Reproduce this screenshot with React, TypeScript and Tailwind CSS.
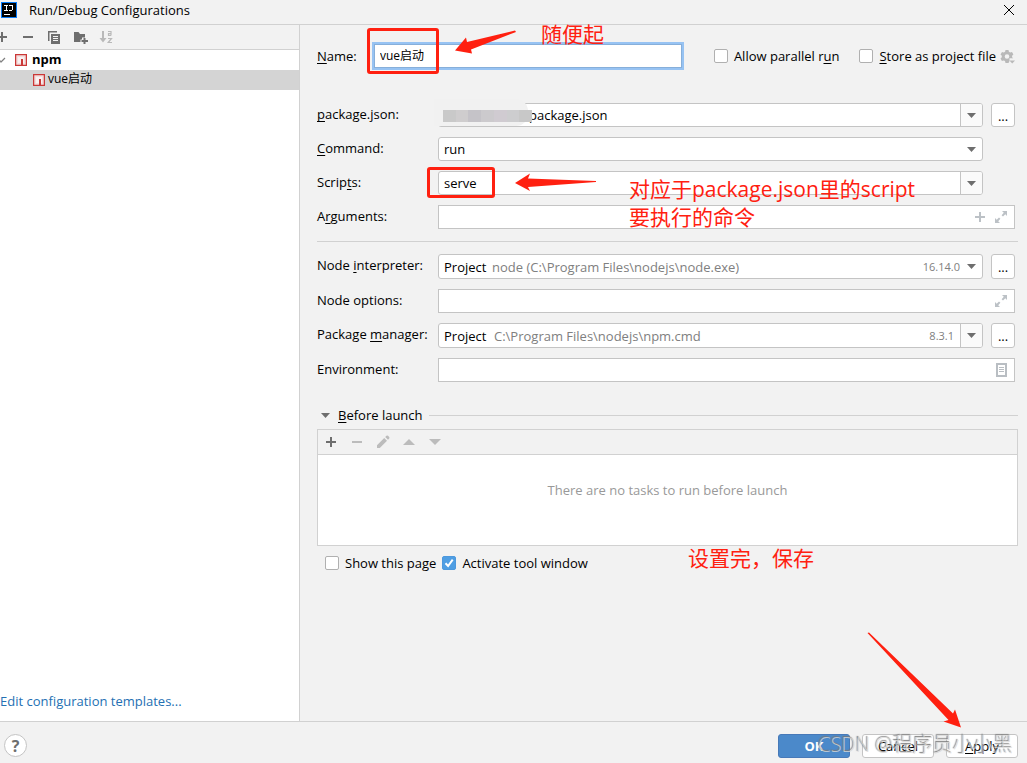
import { useState, type ReactNode } from "react";

// "&" marks the mnemonic letter, same as in the IDE's bundles
function Mnemonic({ text }: { text: string }) {
    const at = text.indexOf("&");
    if (at < 0) return <>{text}</>;
    return (
        <>
            {text.slice(0, at)}
            <span className="underline underline-offset-2 [text-decoration-skip-ink:none]">{text[at + 1]}</span>
            {text.slice(at + 2)}
        </>
    );
}

function NpmIcon() {
    return (
        <svg width="12" height="12" viewBox="0 0 12 12" className="shrink-0">
            <rect x="0.6" y="0.6" width="10.8" height="10.8" fill="#f3dede" stroke="#cb3837" strokeWidth="1.3" />
            <path d="M3 3h6v6H3z" fill="#fff" fillOpacity="0.6" />
            <path d="M6 5h2v6H6z" fill="#cb3837" />
        </svg>
    );
}

function Arrow() {
    return (
        <svg width="9" height="5" viewBox="0 0 9 5" fill="#6e6e6e">
            <path d="M0 0h9L4.5 5z" />
        </svg>
    );
}

function ExpandIcon() {
    return (
        <svg width="12" height="12" viewBox="0 0 12 12" fill="#bcc1c6">
            <path d="M7 0h5v5l-1.7-1.7L8 5.6 6.6 4.2 8.8 1.8zM0 7l1.7 1.7L4 6.4l1.4 1.4-2.2 2.4L5 12H0z" />
        </svg>
    );
}

function Row({ id, label, tall, children }: { id: string; label: string; tall?: boolean; children: ReactNode }) {
    return (
        <div className={tall ? "flex h-[25px] items-stretch" : "flex h-6 items-stretch"}>
            <label htmlFor={id} className="w-[121px] shrink-0 whitespace-nowrap">
                <Mnemonic text={label} />
            </label>
            {children}
        </div>
    );
}

function ArrowButton({ label }: { label: string }) {
    return (
        <button aria-label={label} className="flex w-[22px] items-center justify-center border-l border-[#c4c4c4] bg-[#fafafa]">
            <Arrow />
        </button>
    );
}

function MoreButton({ label }: { label: string }) {
    return (
        <button
            aria-label={label}
            className="ml-2 mr-[3px] w-6 shrink-0 rounded-[3px] border border-[#c4c4c4] bg-white text-center leading-6"
        >
            ...
        </button>
    );
}

const comboBox = "flex min-w-0 flex-1 overflow-hidden rounded-[3px] border border-[#c4c4c4] bg-white";
const plainBox = "mr-[3px] flex min-w-0 flex-1 items-center border border-[#c4c4c4] bg-white pr-[7px]";

function CheckBox({ label, initial = false }: { label: string; initial?: boolean }) {
    const [checked, setChecked] = useState(initial);
    return (
        <label className="flex items-center gap-[6px] whitespace-nowrap">
            <span className="grid">
                <input
                    type="checkbox"
                    checked={checked}
                    onChange={(e) => setChecked(e.target.checked)}
                    className="col-start-1 row-start-1 size-[14px] appearance-none rounded-[2px] border border-[#b0b0b0] bg-white checked:border-[#4d98dd] checked:bg-[#4f9ee3]"
                />
                {checked && (
                    <svg
                        width="14"
                        height="14"
                        viewBox="0 0 14 14"
                        fill="none"
                        className="pointer-events-none col-start-1 row-start-1"
                    >
                        <path d="M3.5 7.2l2.6 2.8 4.6-6.4" stroke="#fff" strokeWidth="2" />
                    </svg>
                )}
            </span>
            <span>
                <Mnemonic text={label} />
            </span>
        </label>
    );
}

function Sidebar() {
    return (
        <aside className="flex w-[300px] shrink-0 flex-col border-r border-[#d1d1d1] bg-white">
            <div className="flex h-[25px] shrink-0 items-center border-b border-[#d1d1d1] bg-[#f2f2f2]">
                <button aria-label="Add" className="w-[22px]">
                    <svg width="8" height="12" viewBox="0 0 8 12" fill="#6e6e6e">
                        <path d="M0 5h7v2H0zM1 1h2v10H1z" />
                    </svg>
                </button>
                <button aria-label="Remove" className="w-[26px]">
                    <svg width="12" height="12" viewBox="0 0 12 12" fill="#6e6e6e">
                        <path d="M1 5h10v2H1z" />
                    </svg>
                </button>
                <button aria-label="Copy" className="w-[25px]">
                    <svg width="13" height="13" viewBox="0 0 13 13" fill="#6e6e6e">
                        <path d="M0 0h9v1.5H1.5V10H0z" />
                        <path fillRule="evenodd" d="M3 3h9v10H3zM5 5v1h5V5zM5 7v1h5V7zM5 9v1h5V9z" />
                    </svg>
                </button>
                <button aria-label="New folder" className="w-[26px]">
                    <svg width="15" height="13" viewBox="0 0 15 13" fill="#6e6e6e">
                        <path d="M1 1h4.500l1.500 2h5v3.500h-3v2H7.500V11H1z" />
                        <path d="M10.500 7h2v2H15v2h-2.500v2h-2v-2H8.500V9h2z" />
                    </svg>
                </button>
                <button aria-label="Sort alphabetically" disabled>
                    <svg width="14" height="14" viewBox="0 0 14 14" fill="none" stroke="#b9b9b9">
                        <path d="M4 1v9" strokeWidth="2" />
                        <path d="M.5 8h7L4 12.500z" fill="#b9b9b9" stroke="none" />
                        <path
                            d="M9 1.500h3v4M12 3.500H9.500v1.800H12M9 8.500h3.500L9.200 12.500H13"
                            strokeWidth="1.2"
                        />
                    </svg>
                </button>
            </div>
            <div className="flex h-5 items-center font-bold">
                <svg width="6" height="6" viewBox="0 0 6 6" fill="none" className="mr-[9px]">
                    <path d="M0 3.500L1 5 5 1" stroke="#7f7f7f" strokeWidth="1.200" />
                </svg>
                <NpmIcon />
                <span className="ml-[5px] pb-0.5">npm</span>
            </div>
            <div className="flex h-5 items-center gap-[3px] bg-[#d4d4d4] pl-[33px]">
                <NpmIcon />
                <span className="pb-0.5 text-[12px]">vue启动</span>
            </div>
            <a href="#templates" className="mt-auto mb-[9px] self-start text-[#2470b3]">
                Edit configuration templates...
            </a>
        </aside>
    );
}

function BeforeLaunch() {
    return (
        <section>
            <div className="mt-[23px] flex h-5 items-center">
                <button className="flex items-center gap-2 pl-1 whitespace-nowrap">
                    <Arrow />
                    <span>
                        <Mnemonic text="&Before launch" />
                    </span>
                </button>
                <div className="ml-[6px] h-px flex-1 bg-[#d1d1d1]" />
            </div>
            <div className="mt-1 h-[117px] border border-[#d1d1d1] bg-white">
                <div className="flex h-[25px] items-center gap-3 border-b border-[#d1d1d1] bg-[#f2f2f2] pl-[6px]">
                    <button aria-label="Add task">
                        <svg width="14" height="14" viewBox="0 0 14 14" fill="#6e6e6e">
                            <path d="M2 6h10v2H2zM6 2h2v10H6z" />
                        </svg>
                    </button>
                    <button aria-label="Remove task" disabled>
                        <svg width="14" height="14" viewBox="0 0 14 14" fill="#bcbcbc">
                            <path d="M2 6h10v2H2z" />
                        </svg>
                    </button>
                    <button aria-label="Edit task" disabled>
                        <svg width="14" height="14" viewBox="0 0 14 14" fill="#bcbcbc">
                            <path d="M1 10.200L8.200 3l2.800 2.800L3.800 13H1zM9.200 2l1.200-1.200q.8-.6 1.600 0l1.200 1.200q.6.800 0 1.600L12 4.800z" />
                        </svg>
                    </button>
                    <button aria-label="Move task up" disabled>
                        <svg width="14" height="14" viewBox="0 0 14 14" fill="#bcbcbc">
                            <path d="M1 10h12L7 4z" />
                        </svg>
                    </button>
                    <button aria-label="Move task down" disabled>
                        <svg width="14" height="14" viewBox="0 0 14 14" fill="#bcbcbc">
                            <path d="M1 4h12l-6 6z" />
                        </svg>
                    </button>
                </div>
                <p className="pt-6 text-center text-[#999]">There are no tasks to run before launch</p>
            </div>
            <div className="mt-[6px] flex gap-[6px] pl-2">
                <CheckBox label="Show this page" />
                <CheckBox label="Activate tool window" initial />
            </div>
        </section>
    );
}

// Hand-drawn marks over the dialog
function Annotations() {
    return (
        <div className="pointer-events-none absolute inset-0 text-[21px] leading-7 text-[#ff2010]">
            <div className="absolute top-[28px] left-[367px] h-[46px] w-[72px] rounded-[3px] border-3 border-[#ff2010]" />
            <div className="absolute top-[167px] left-[427px] h-[31px] w-[68px] rounded-[3px] border-3 border-[#ff2010]" />
            <svg className="absolute top-[30px] left-[454px]" width="64" height="26" viewBox="0 0 64 26" fill="#ff2010">
                <path d="M1 20.500L12 7.500l1 4.500L61 0.500l1 1.500L17 19.500l1 4z" />
            </svg>
            <svg className="absolute top-[173px] left-[515px]" width="82" height="20" viewBox="0 0 82 20" fill="#ff2010">
                <path d="M0 10L15 0.500l-2 5L81 8v1l-68 5 2 4z" />
            </svg>
            <svg className="absolute top-[632px] left-[867px]" width="96" height="97" viewBox="0 0 96 97" fill="#ff2010">
                <path d="M0.500 1L2 0.500 86 81.500 88 77.500 94 95.500 76.500 89.500l5-1.500z" />
            </svg>
            <span className="absolute top-[20px] left-[541px] whitespace-nowrap">随便起</span>
            <p className="absolute top-[175px] left-[629px] whitespace-nowrap">
                对应于package.json里的script
                <br />
                要执行的命令
            </p>
            <span className="absolute top-[544px] left-[688px] whitespace-nowrap">设置完，保存</span>
        </div>
    );
}

export default function App() {
    const [name, setName] = useState("vue启动");

    return (
        <div className="relative flex min-h-screen flex-col bg-[#f2f2f2] font-['Open_Sans','Noto_Sans_CJK_SC',sans-serif] text-[13px] leading-[22px] text-black">
            <header className="flex h-[25px] shrink-0 items-center border-b border-[#d1d1d1] pb-1 pl-px">
                <svg width="16" height="16" viewBox="0 0 16 16" shapeRendering="crispEdges">
                    <rect width="16" height="16" fill="#087cfa" />
                    <rect x="1" y="1" width="14" height="14" fill="#000" />
                    <path d="M3 3.500h4M5 3v5M3 8.500h4M8 3.500h4M11.500 3v5M8 8.500h3" fill="none" stroke="#fff" />
                    <path d="M3 12h6v1H3z" fill="#fff" />
                </svg>
                <h1 className="ml-3">Run/Debug Configurations</h1>
                <button aria-label="Close" className="mr-[13px] ml-auto">
                    <svg width="10" height="10" viewBox="0 0 10 10" stroke="#000">
                        <path d="M0 0l10 10M10 0L0 10" />
                    </svg>
                </button>
            </header>

            <div className="flex flex-1">
                <Sidebar />
                <main className="min-w-0 flex-1 pt-[18px] pr-[9px] pl-[17px]">
                    <div className="flex h-[26px] items-center">
                        <label htmlFor="name" className="w-[57px] shrink-0">
                            <Mnemonic text="&Name:" />
                        </label>
                        <input
                            id="name"
                            value={name}
                            onChange={(e) => setName(e.target.value)}
                            className="h-6 min-w-0 flex-1 border border-[#87afda] bg-white pb-0.5 pl-[5px] text-[12px] ring-2 ring-[#97c3f3] outline-none"
                        />
                        <div className="ml-8 flex shrink-0 items-center gap-5">
                            <CheckBox label="Allow parallel r&un" />
                            <CheckBox label="&Store as project file" />
                        </div>
                        <button aria-label="Project file settings" className="mr-[3px] ml-1">
                            <svg width="15" height="15" viewBox="0 0 15 15" fill="#b9b9b9">
                                <path
                                    fillRule="evenodd"
                                    d="M5.500 1h3l.4 1.800 1.300.8 1.800-.6L13.400 5.500 12.100 6.800v1.400l1.100 1H9.500v2.700L8.500 14h-3l-.5-1.900-1.300-.7-1.800.5L.5 9.400l1.300-1.200V6.800L.5 5.500 2 3l1.800.6 1.300-.8zM7 5.200a2.300 2.300 0 100 4.600 2.300 2.300 0 000-4.600z"
                                />
                                <path d="M9.500 11.500H15L12.200 14.500z" />
                            </svg>
                        </button>
                    </div>

                    <div className="mt-[34px] flex flex-col gap-[10px]">
                        <Row id="package-json" label="&package.json:">
                            <div className="relative flex min-w-0 flex-1">
                                <div className={comboBox}>
                                    <input
                                        id="package-json"
                                        defaultValue="package.json"
                                        className="min-w-0 flex-1 pl-[90px] outline-none"
                                    />
                                    <ArrowButton label="Choose package.json" />
                                </div>
                                {/* path is blurred out */}
                                <div className="absolute -top-1 -left-1 h-[27px] w-[94px] rounded-r-xl bg-[#f1f1f1]" />
                                <div className="absolute top-[7px] left-[5px] flex h-3 w-[89px]">
                                    <span className="flex-1 bg-[#c9c9c9]" />
                                    <span className="flex-1 bg-[#cfcdce]" />
                                    <span className="flex-1 bg-[#c5c3c8]" />
                                    <span className="flex-1 bg-[#cccacd]" />
                                    <span className="flex-1 bg-[#d0cbd1]" />
                                    <span className="flex-1 bg-[#cdcdcf]" />
                                    <span className="flex-1 bg-[#c8c8c8]" />
                                </div>
                            </div>
                            <MoreButton label="Browse package.json" />
                        </Row>
                        <Row id="command" label="&Command:">
                            <div className={`${comboBox} mr-[35px] grid items-center`}>
                                <select
                                    id="command"
                                    className="col-start-1 row-start-1 w-full appearance-none pl-[5px] outline-none"
                                >
                                    <option>run</option>
                                </select>
                                <span className="pointer-events-none col-start-1 row-start-1 mr-[6px] flex justify-self-end">
                                    <Arrow />
                                </span>
                            </div>
                        </Row>
                        <Row id="scripts" label="Scrip&ts:">
                            <div className={`${comboBox} mr-[35px]`}>
                                <input id="scripts" defaultValue="serve" className="min-w-0 flex-1 pl-[5px] outline-none" />
                                <ArrowButton label="Choose script" />
                            </div>
                        </Row>
                        <Row id="arguments" label="A&rguments:">
                            <div className={plainBox}>
                                <input id="arguments" className="min-w-0 flex-1 pl-[5px] outline-none" />
                                <button aria-label="Insert macro" className="mr-[10px]">
                                    <svg width="10" height="10" viewBox="0 0 10 10" fill="#bcc1c6">
                                        <path d="M0 4h10v2H0zM4 0h2v10H4z" />
                                    </svg>
                                </button>
                                <button aria-label="Expand arguments">
                                    <ExpandIcon />
                                </button>
                            </div>
                        </Row>
                    </div>

                    <hr className="mt-3 mb-3 border-[#d1d1d1]" />

                    <div className="flex flex-col gap-[10px]">
                        <Row id="interpreter" label="Node &interpreter:" tall>
                            <div className={`${comboBox} grid items-center`}>
                                <select
                                    id="interpreter"
                                    className="col-start-1 row-start-1 w-full appearance-none pl-[5px] outline-none"
                                >
                                    <option>Project</option>
                                </select>
                                <div className="pointer-events-none col-start-1 row-start-1 flex items-center pr-[6px] pl-[53px] text-[#808080]">
                                    <span>node (C:\Program Files\nodejs\node.exe)</span>
                                    <span className="mr-[7px] ml-auto text-[11px]">16.14.0</span>
                                    <Arrow />
                                </div>
                            </div>
                            <MoreButton label="Browse interpreters" />
                        </Row>
                        <Row id="node-options" label="Node options:">
                            <div className={plainBox}>
                                <input id="node-options" className="min-w-0 flex-1 pl-[5px] outline-none" />
                                <button aria-label="Expand node options">
                                    <ExpandIcon />
                                </button>
                            </div>
                        </Row>
                        <Row id="package-manager" label="Package &manager:" tall>
                            <div className={comboBox}>
                                <div className="grid min-w-0 flex-1 items-center">
                                    <input
                                        id="package-manager"
                                        defaultValue="Project"
                                        className="col-start-1 row-start-1 w-full pl-[5px] outline-none"
                                    />
                                    <div className="pointer-events-none col-start-1 row-start-1 flex items-center pr-[6px] pl-[55px] text-[#808080]">
                                        <span>C:\Program Files\nodejs\npm.cmd</span>
                                        <span className="ml-auto text-[11px]">8.3.1</span>
                                    </div>
                                </div>
                                <ArrowButton label="Choose package manager" />
                            </div>
                            <MoreButton label="Browse package managers" />
                        </Row>
                        <Row id="environment" label="Environment:">
                            <div className={plainBox}>
                                <input id="environment" className="min-w-0 flex-1 pl-[5px] outline-none" />
                                <button aria-label="Edit environment variables">
                                    <svg width="11" height="14" viewBox="0 0 11 14" fill="none" stroke="#b9bec3">
                                        <path d="M1 1h9v12H1z" strokeWidth="2" />
                                        <path d="M3 4.500h5M3 6.500h5M3 8.500h5" />
                                    </svg>
                                </button>
                            </div>
                        </Row>
                    </div>

                    <BeforeLaunch />
                </main>
            </div>

            <footer className="flex h-[42px] shrink-0 items-center gap-3 border-t border-[#d1d1d1] pt-[6px] pr-[9px] pl-1">
                <button
                    aria-label="Help"
                    className="mr-auto size-[23px] rounded-full border border-[#c4c4c4] bg-white text-[16px] leading-5 font-bold text-[#6e6e6e]"
                >
                    ?
                </button>
                <button className="h-6 w-[72px] rounded-[3px] border border-[#4779b8] bg-[#4b89ca] font-bold text-white">
                    OK
                </button>
                <button className="h-6 w-[72px] rounded-[3px] border border-[#c4c4c4] bg-white">Cancel</button>
                <button className="h-6 w-[72px] rounded-[3px] border border-[#c4c4c4] bg-white">
                    <Mnemonic text="&Apply" />
                </button>
            </footer>

            <Annotations />
            <span className="pointer-events-none absolute right-[14px] bottom-1 text-[20px] leading-7 font-light whitespace-nowrap text-[#d8d8d8]/80 [text-shadow:-1px_-1px_1px_#777]">
                CSDN @程序员小小黑
            </span>
        </div>
    );
}
